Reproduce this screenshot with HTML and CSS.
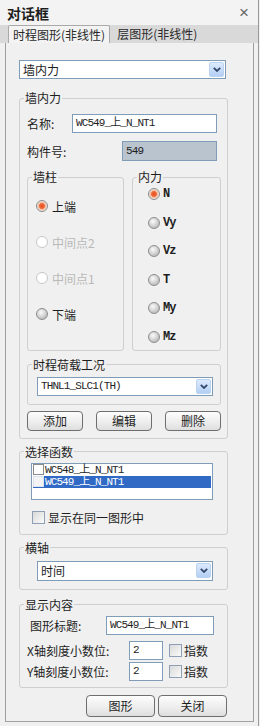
FILE: index.html
```html
<!DOCTYPE html>
<html lang="zh">
<head>
  <meta charset="UTF-8" />
  <title>对话框</title>
  <link rel="stylesheet" href="styles.css">
</head>
<body>
<div class="window">
  <div class="titlebar">
    <span class="title">对话框</span>
    <span class="close">×</span>
  </div>
  <div class="tabs">
    <div class="tab active">时程图形(非线性)</div>
    <div class="tab">层图形(非线性)</div>
  </div>

  <div class="panel">
    <div class="combo top-combo">
      <span>墙内力</span>
      <span class="arrow"><svg width="8" height="5" viewBox="0 0 8 5"><path d="M0.8 0.8 L4 4 L7.2 0.8" stroke="#34496e" stroke-width="1.8" fill="none"/></svg></span>
    </div>

    <fieldset class="group main-group">
      <legend>墙内力</legend>
      <div class="row first">
        <span class="label">名称:</span>
        <div class="field name-field mono">WC549_上_N_NT1</div>
      </div>
      <div class="row second">
        <span class="label">构件号:</span>
        <div class="field id-field mono">549</div>
      </div>

      <div class="pair">
        <fieldset class="group wall-group">
          <legend>墙柱</legend>
          <div class="radio-row"><span class="radio checked"></span>上端</div>
          <div class="radio-row disabled"><span class="radio off"></span>中间点2</div>
          <div class="radio-row disabled"><span class="radio off"></span>中间点1</div>
          <div class="radio-row"><span class="radio"></span>下端</div>
        </fieldset>
        <fieldset class="group force-group">
          <legend>内力</legend>
          <div class="radio-row force"><span class="radio checked"></span>N</div>
          <div class="radio-row force"><span class="radio"></span>Vy</div>
          <div class="radio-row force"><span class="radio"></span>Vz</div>
          <div class="radio-row force"><span class="radio"></span>T</div>
          <div class="radio-row force"><span class="radio"></span>My</div>
          <div class="radio-row force"><span class="radio"></span>Mz</div>
        </fieldset>
      </div>

      <fieldset class="group load-group">
        <legend>时程荷载工况</legend>
        <div class="combo inner-combo">
          <span class="mono">THNL1_SLC1(TH)</span>
          <span class="arrow"><svg width="8" height="5" viewBox="0 0 8 5"><path d="M0.8 0.8 L4 4 L7.2 0.8" stroke="#34496e" stroke-width="1.8" fill="none"/></svg></span>
        </div>
      </fieldset>

      <div class="btn-row">
        <button class="btn small">添加</button>
        <button class="btn small">编辑</button>
        <button class="btn small">删除</button>
      </div>
    </fieldset>

    <fieldset class="group func-group">
      <legend>选择函数</legend>
      <div class="listbox">
        <div class="item"><span class="box"></span><span class="mono">WC548_上_N_NT1</span></div>
        <div class="item selected"><span class="box"></span><span class="mono">WC549_上_N_NT1</span></div>
      </div>
      <div class="check-row"><span class="check"></span>显示在同一图形中</div>
    </fieldset>

    <fieldset class="group axis-group">
      <legend>横轴</legend>
      <div class="combo inner-combo">
        <span>时间</span>
        <span class="arrow"><svg width="8" height="5" viewBox="0 0 8 5"><path d="M0.8 0.8 L4 4 L7.2 0.8" stroke="#34496e" stroke-width="1.8" fill="none"/></svg></span>
      </div>
    </fieldset>

    <fieldset class="group show-group">
      <legend>显示内容</legend>
      <div class="show-row title-row">
        <span class="label title-label">图形标题:</span>
        <div class="field title-field mono">WC549_上_N_NT1</div>
      </div>
      <div class="show-row">
        <span class="label axis-label">X轴刻度小数位:</span>
        <div class="field digit-field mono">2</div>
        <span class="check"></span><span>指数</span>
      </div>
      <div class="show-row last">
        <span class="label axis-label">Y轴刻度小数位:</span>
        <div class="field digit-field mono">2</div>
        <span class="check"></span><span>指数</span>
      </div>
    </fieldset>

    <div class="footer">
      <button class="btn big">图形</button>
      <button class="btn big">关闭</button>
    </div>
  </div>
</div>
</body>
</html>
```

FILE: styles.css
```css
body {
  margin: 0;
  background: #f0f0f0;
  font-family: "Noto Sans CJK SC", sans-serif;
  font-size: 12px;
  color: #1e1e1e;
}

.mono {
  font-family: "Liberation Mono", "Noto Sans CJK SC", monospace;
  font-size: 11px;
  letter-spacing: -0.9px;
}

.window {
  width: 258px;
  height: 726px;
  border-right: 1px solid #9a9a9a;
  background: #f0f0f0;
}

.titlebar {
  height: 25px;
  display: flex;
  align-items: center;
  justify-content: space-between;
  padding: 0 9px 0 7px;
  background: #f3f3f3;
}

.title {
  font-weight: bold;
  font-size: 14px;
  line-height: 16px;
}

.close {
  font-family: "Liberation Sans", sans-serif;
  font-size: 17px;
  color: #666;
}

.tabs {
  height: 18px;
  display: flex;
  padding-left: 8px;
  background: #d9d9d9;
}

.tab {
  height: 18px;
  line-height: 18px;
  padding: 0 4px;
  margin-left: 3px;
  color: #2a2a2a;
}

.tab.active {
  margin-left: 0;
  background: #f3f3f3;
  border: 1px solid #a9a9a9;
  border-bottom: none;
  border-radius: 2px 2px 0 0;
  height: 17px;
  line-height: 17px;
}

.panel {
  margin-left: 5px;
  width: 249px;
  height: 679px;
  box-sizing: border-box;
  border: 1px solid #a0a0a0;
  border-top: none;
  padding: 17px 0 0 13px;
}

/* combo boxes */
.combo {
  display: flex;
  align-items: center;
  height: 19px;
  box-sizing: border-box;
  border: 1px solid #7f9db9;
  background: #fff;
  padding: 0 1px 0 3px;
}

.combo .arrow {
  margin-left: auto;
  width: 15px;
  height: 15px;
  box-sizing: border-box;
  border: 1px solid #bcd3f0;
  border-radius: 2px;
  background: linear-gradient(#dcebfd, #b3cff4);
  display: flex;
  align-items: center;
  justify-content: center;
}

.top-combo {
  width: 207px;
}

.inner-combo {
  width: 176px;
  margin-top: 5px;
}

/* group boxes */
.group {
  --pl: 7px;
  margin: 0;
  min-width: 0;
  box-sizing: border-box;
  border: 1px solid #cfcfcf;
  border-radius: 3px;
  padding: 0 6px 7px var(--pl);
}

.group legend {
  padding: 0 1px;
  margin-left: calc(4px - var(--pl));
  line-height: 14px;
}

.main-group {
  width: 209px;
  margin-top: 12px;
}

.row {
  display: flex;
  align-items: center;
  justify-content: space-between;
  margin-right: 4px;
}

.row.first {
  margin-top: 9px;
}

.row.second {
  margin-top: 8px;
}

.field {
  height: 19px;
  box-sizing: border-box;
  border: 1px solid #7f9db9;
  background: #fff;
  padding-left: 3px;
  line-height: 17px;
}

.name-field {
  width: 145px;
}

.id-field {
  width: 95px;
  height: 20px;
  line-height: 18px;
  background: #b9c4cf;
}

.pair {
  display: grid;
  grid-template-columns: 97px 89px;
  gap: 8px;
  margin-top: 9px;
}

.wall-group {
  --pl: 8px;
  padding-top: 14px;
}

.force-group {
  --pl: 15px;
  padding-top: 2px;
  padding-bottom: 5px;
}

.radio-row {
  display: flex;
  align-items: center;
  height: 16px;
  gap: 4px;
}

.wall-group .radio-row + .radio-row {
  margin-top: 20px;
}

.force-group .radio-row + .radio-row {
  margin-top: 12.6px;
}

.radio-row.disabled {
  color: #b9b9b9;
}

.radio-row.force {
  font-family: "Liberation Mono", monospace;
  font-size: 12px;
  font-weight: bold;
  letter-spacing: -1px;
  gap: 3px;
}

.radio {
  width: 12px;
  height: 12px;
  box-sizing: border-box;
  border-radius: 50%;
  border: 1px solid #8d8d8d;
  background: radial-gradient(circle at 40% 35%, #fbfbfb 0, #d6d6d6 45%, #a8a8a8 100%);
}

.radio.checked {
  background: radial-gradient(circle at 50% 50%, #e4501e 0, #ee6a3a 2.5px, #f7bfa4 3.5px, #e8e2df 5px);
}

.radio.off {
  border-color: #c6c6c6;
  background: #fff;
}

.load-group {
  --pl: 9px;
  margin-top: 7px;
  padding-bottom: 8px;
}

.btn-row {
  display: flex;
  justify-content: space-between;
  margin-top: 6px;
}

.btn {
  font-family: "Noto Sans CJK SC", sans-serif;
  font-size: 12px;
  color: #1e1e1e;
  border: 1px solid #6e6e6e;
  border-radius: 4px;
  background: linear-gradient(#fdfdfd, #ececec 60%, #dedede);
  padding: 0;
}

.btn.small {
  width: 56px;
  height: 20px;
  line-height: 18px;
}

.func-group {
  --pl: 11px;
  width: 209px;
  margin-top: 6px;
  padding-bottom: 8px;
}

.listbox {
  width: 182px;
  height: 37px;
  box-sizing: border-box;
  border: 1px solid #7f9db9;
  background: #fff;
  margin-top: 4px;
  padding: 0 1px;
}

.item {
  display: flex;
  align-items: center;
  height: 12px;
  line-height: 12px;
}

.item .box {
  width: 11px;
  height: 11px;
  box-sizing: border-box;
  border: 1px solid #8c8c8c;
  background: #fff;
  margin-right: 1px;
}

.item.selected {
  background: #316ac5;
  color: #fff;
}

.item.selected .box {
  border-color: #d8e2f2;
  background: #f4f4f4;
}

.check-row {
  display: flex;
  align-items: center;
  gap: 3px;
  margin-top: 9px;
  margin-left: 1px;
}

.check {
  width: 13px;
  height: 13px;
  box-sizing: border-box;
  border: 1px solid #8f9fb6;
  background: linear-gradient(135deg, #d9d9d9, #fbfbfb);
}

.axis-group {
  --pl: 17px;
  width: 209px;
  margin-top: 6px;
  padding-bottom: 8px;
}

.axis-group .inner-combo {
  margin-top: 6px;
  height: 20px;
}

.show-group {
  width: 209px;
  margin-top: 8px;
  padding-bottom: 6px;
}

.show-row {
  display: flex;
  align-items: center;
  margin-top: 6px;
}

.show-row.title-row {
  margin-top: 4px;
}

.show-row.last {
  margin-top: 2px;
}

.title-label {
  width: 76px;
  padding-left: 3px;
}

.title-field {
  width: 108px;
}

.axis-label {
  width: 102px;
}

.digit-field {
  width: 34px;
  margin-right: 6px;
}

.show-row .check {
  margin-right: 2px;
}

.footer {
  display: flex;
  justify-content: flex-end;
  gap: 3px;
  width: 208px;
  margin-top: 7px;
}

.btn.big {
  width: 69px;
  height: 22px;
}
```
